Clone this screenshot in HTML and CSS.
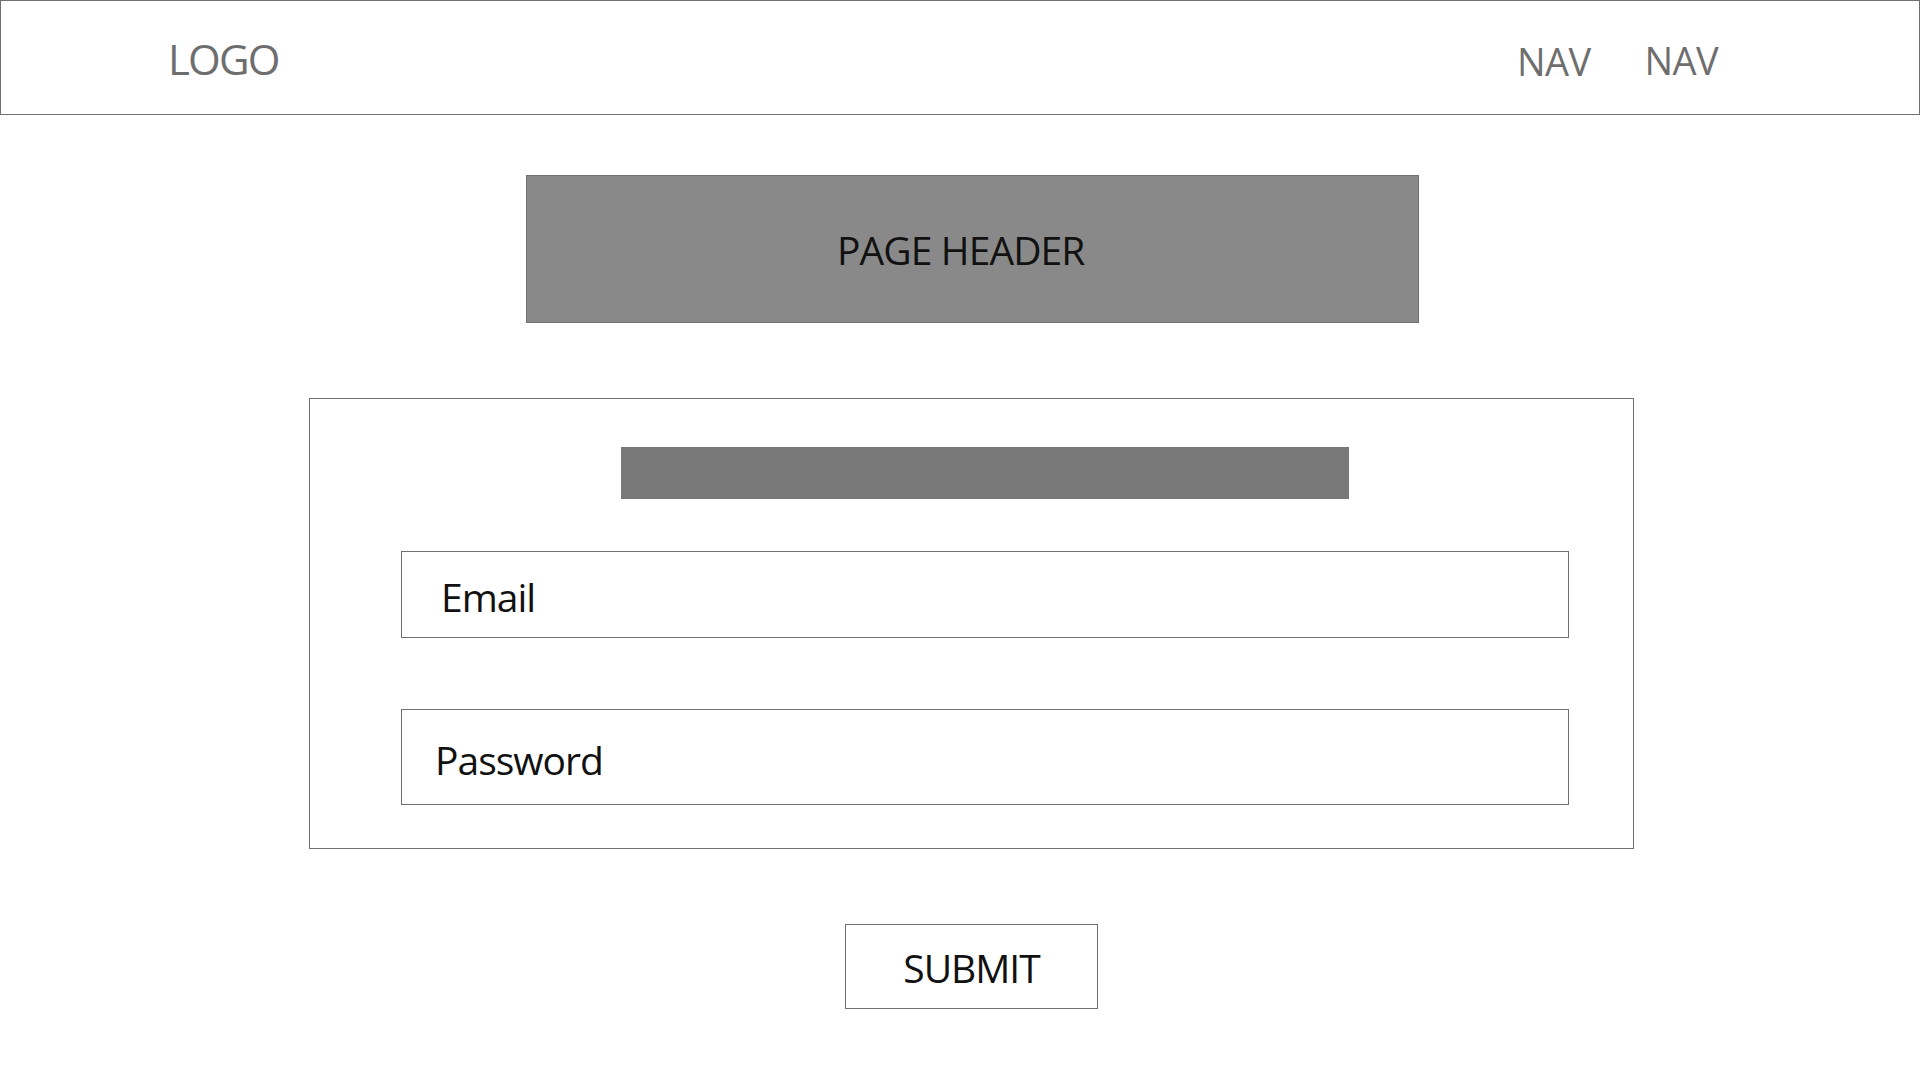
FILE: index.html
```html
<!DOCTYPE html>
<html lang="en">
<head>
<meta charset="utf-8">
<title>Login</title>
<link rel="stylesheet" href="styles.css">
</head>
<body>
<header class="topbar">
  <div class="logo">LOGO</div>
  <nav class="nav">
    <a class="nav-link">NAV</a>
    <a class="nav-link nav-link-2">NAV</a>
  </nav>
</header>
<main class="main">
  <div class="page-header">PAGE HEADER</div>
  <form class="form-box">
    <div class="form-title"></div>
    <div class="field field-email">Email</div>
    <div class="field field-password">Password</div>
  </form>
  <div class="submit">SUBMIT</div>
</main>
</body>
</html>
```

FILE: styles.css
```css
* { box-sizing: border-box; }
html, body { margin: 0; padding: 0; background: #fff; }
body {
  font-family: "Open Sans", "Noto Sans", sans-serif;
  color: #111;
  width: 1920px;
  height: 1080px;
  overflow: hidden;
}
.topbar {
  display: flex;
  align-items: flex-start;
  height: 115px;
  width: 1920px;
  border: 1px solid #707070;
  padding-left: 167px;
}
.logo {
  font-size: 42px;
  line-height: 42px;
  color: #6e6e6e;
  margin-top: 37px;
  letter-spacing: -1.8px;
}
.nav {
  margin-left: auto;
  display: flex;
  gap: 54px;
  padding-right: 201px;
  margin-top: 41px;
}
.nav-link {
  font-size: 38px;
  line-height: 38px;
  color: #6e6e6e;
  letter-spacing: -0.6px;
}
.nav-link-2 { margin-top: -1px; }
.main {
  margin-left: 309px;
  width: 1325px;
  padding-top: 60px;
}
.page-header {
  margin-left: 217px;
  width: 893px;
  height: 148px;
  background: #898989;
  border: 1px solid #707070;
  font-size: 39px;
  line-height: 40px;
  padding-top: 54px;
  padding-left: 310px;
  color: #111;
  letter-spacing: -0.9px;
}
.form-box {
  margin: 75px 0 0 0;
  width: 1325px;
  height: 451px;
  border: 1px solid #707070;
  padding: 48px 0 0 0;
}
.form-title {
  margin-left: 311px;
  width: 728px;
  height: 52px;
  background: #787878;
}
.field {
  margin-left: 91px;
  width: 1168px;
  border: 1px solid #707070;
  font-size: 39px;
  line-height: 40px;
  letter-spacing: -1px;
  color: #111;
}
.field-email {
  margin-top: 52px;
  height: 87px;
  padding: 25px 0 0 39px;
}
.field-password {
  margin-top: 71px;
  height: 96px;
  padding: 30px 0 0 33px;
}
.submit {
  margin: 75px 0 0 536px;
  width: 253px;
  height: 85px;
  border: 1px solid #707070;
  font-size: 39px;
  line-height: 40px;
  letter-spacing: -1px;
  padding-top: 23px;
  text-align: center;
  color: #111;
}
```
